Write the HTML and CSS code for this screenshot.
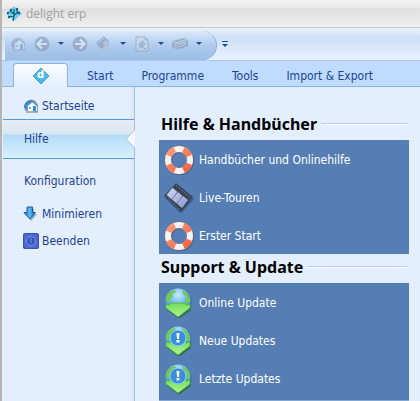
FILE: index.html
```html
<!DOCTYPE html>
<html lang="de">
<head>
    <meta charset="UTF-8">
    <meta name="viewport" content="width=device-width, initial-scale=1.0">
    <title>delight erp</title>
    <link rel="stylesheet" href="styles.css">
</head>
<body>

<!-- shared icons -->
<svg class="defs" aria-hidden="true">
    <defs>
        <linearGradient id="ringRed" x1="0" y1="0" x2="1" y2="1">
            <stop offset="0" stop-color="#ff9a7c"/>
            <stop offset="1" stop-color="#f0603c"/>
        </linearGradient>
        <radialGradient id="globe" cx=".5" cy=".25" r=".8">
            <stop offset="0" stop-color="#c4ebff"/>
            <stop offset=".5" stop-color="#6bb8ee"/>
            <stop offset="1" stop-color="#2a7cc8"/>
        </radialGradient>
        <linearGradient id="green" x1="0" y1="0" x2="0" y2="1">
            <stop offset="0" stop-color="#6fdc5c"/>
            <stop offset="1" stop-color="#b4f78f"/>
        </linearGradient>
        <linearGradient id="film" x1="0" y1="0" x2="1" y2="1">
            <stop offset="0" stop-color="#d0d9f5"/>
            <stop offset="1" stop-color="#8598d6"/>
        </linearGradient>
        <linearGradient id="arrow" x1="0" y1="0" x2="1" y2="0">
            <stop offset="0" stop-color="#1d73c9"/>
            <stop offset=".5" stop-color="#5bbcf5"/>
            <stop offset="1" stop-color="#155aa8"/>
        </linearGradient>
        <symbol id="ring" viewBox="0 0 30 30">
            <circle cx="16" cy="16" r="11" fill="none" stroke="#2d4b78" stroke-width="6" opacity=".6"/>
            <circle cx="15" cy="15" r="11" fill="none" stroke="#8d5f60" stroke-width="7"/>
            <circle cx="15" cy="15" r="11" fill="none" stroke="#f5f3f0" stroke-width="6"/>
            <circle cx="15" cy="15" r="11" fill="none" stroke="url(#ringRed)" stroke-width="6" stroke-dasharray="8.64 8.64" stroke-dashoffset="-4"/>
        </symbol>
        <symbol id="movie" viewBox="0 0 30 30">
            <path d="M13 1 L30 16 L17 31 L1 15 Z" fill="#29436e" opacity=".5"/>
            <path d="M12 0 L29 14 L17 29 L0 13 Z" fill="#3b4558"/>
            <path d="M8.500 5 L13 9 L7.500 16 L3 12 Z M14 9.500 L18 13 L12.500 20 L8.500 16.500 Z M19 13.500 L23.500 17 L18 24.500 L13.500 20.500 Z" fill="url(#film)" stroke="#dce4fa" stroke-width=".5"/>
            <path d="M12 2.500 L27 15 M2 13.500 L16 27" stroke="#78849a" stroke-dasharray="1.5 1.8"/>
        </symbol>
        <symbol id="update" viewBox="0 0 30 30">
            <circle cx="15" cy="14" r="12.5" fill="#254a78" opacity=".5"/>
            <circle cx="14" cy="13" r="12.5" fill="url(#globe)"/>
            <path d="M2 14 Q1 6 7 3 L11 2 L12 4 L8 6 L9 9 L6 11 L6 14 Z M18 2 Q26 5 26.500 14 L22 15 L21 11 L23 9 L19 6 Z" fill="#6fc857"/>
            <path d="M4 17 L10 16 L15 17 L20 16 L27 17 V22 L15 31 L3 22 Z" fill="#2b6d38" opacity=".8"/>
            <path d="M2 16 L6 17 V15 H22 V17 L26 16 V20 L14 29 L2 20 Z" fill="url(#green)" stroke="#4bb14a" stroke-width=".8"/>
        </symbol>
        <symbol id="news" viewBox="0 0 30 30">
            <use href="#update"/>
            <circle cx="14" cy="12" r="8" fill="#3a8edc" stroke="#8fd0fa" stroke-width="1"/>
            <path d="M12.500 7 H15.500 L15 13 H13 Z M12.500 14 H15.500 V16.500 H12.500 Z" fill="#fff"/>
        </symbol>
        <symbol id="house" viewBox="0 0 16 16">
            <path d="M2 13 Q0 5 6 2 Q13 0 15 8 L15 14 Z" fill="#8fa5b9"/>
            <path d="M1 10 Q1 2 9 2 L3 8 L6 12 Z" fill="#3886cf"/>
            <path d="M5 8 L10 4 L14 8 V13 L5 14 Z" fill="#f7fbff"/>
            <path d="M3 8 L9 3 L15 8" fill="none" stroke="#5488b5" stroke-width="1.400"/>
            <path d="M10 8 H13 V13 H10 Z" fill="#2690e3"/>
            <path d="M6 9 H8 V11 H6 Z" fill="#78add8"/>
            <path d="M3 14 H15" stroke="#727c88"/>
        </symbol>
    </defs>
</svg>

<div class="window">
    <header class="titlebar">
        <svg class="app-icon" viewBox="0 0 16 16" aria-hidden="true">
            <path d="M8 0 L16 7.500 L8 15 L0 7.500 Z" fill="#79cdea"/>
            <path d="M7 15 L8 10 L3 11 M8 11 L8 3 M8 8 L4 5 M8 9 L13 6 M11 7 L11 3" fill="none" stroke="#075a7e" stroke-width="1.200"/>
            <circle cx="5" cy="4" r="1.200" fill="#0c6489"/>
            <circle cx="2" cy="7" r="1.200" fill="#0c6489"/>
            <circle cx="3" cy="11" r="1.200" fill="#0c6489"/>
            <circle cx="11" cy="3" r="1.200" fill="#0c6489"/>
            <circle cx="13" cy="7" r="1.200" fill="#0c6489"/>
        </svg>
        <span>delight erp</span>
    </header>

    <div class="toolbar">
        <div class="quick">
            <button class="tool" aria-label="Startseite">
                <svg class="small muted" viewBox="0 0 16 16"><use href="#house"/></svg>
            </button>
            <button class="tool" aria-label="Zurück">
                <svg class="small faded" viewBox="0 0 16 16">
                    <circle cx="8" cy="8" r="7.500" fill="#8799b3"/>
                    <path d="M8 3.500 L3.500 8 L8 12.500 M4 8 H13" fill="none" stroke="#e6eef9" stroke-width="2.200"/>
                </svg>
            </button>
            <button class="tool drop" aria-label="Verlauf"><i class="caret"></i></button>
            <button class="tool" aria-label="Vorwärts">
                <svg class="small faded" viewBox="0 0 16 16">
                    <circle cx="8" cy="8" r="7.500" fill="#8799b3"/>
                    <path d="M8 3.500 L12.500 8 L8 12.500 M12 8 H3" fill="none" stroke="#e6eef9" stroke-width="2.200"/>
                </svg>
            </button>
            <button class="tool" aria-label="Kontakte">
                <svg class="small faded" viewBox="0 0 16 16">
                    <path d="M0 7 L8 0 L13 5 L13 9 L6 14 Z" fill="#8799b3"/>
                    <circle cx="10" cy="8" r="3" fill="#a5b9d3"/>
                    <path d="M5 14 Q8 9 12 11 L16 14 L12 16 Z" fill="#b2c5dc"/>
                    <path d="M2 7 L8 2" stroke="#b5c8df"/>
                </svg>
            </button>
            <button class="tool drop" aria-label="Kontakte Menü"><i class="caret"></i></button>
            <button class="tool" aria-label="Dokument">
                <svg class="small faded" viewBox="0 0 16 16">
                    <path d="M2 1 H11 L14 4 V15 H2 Z" fill="#ccdaec" stroke="#8799b3"/>
                    <path d="M11 1 V4 H14" fill="none" stroke="#8799b3"/>
                    <path d="M8 4 L12 8 L8 12 L4 9 Z" fill="#93abc9"/>
                    <path d="M4 13 L7 10 L9 12 L12 13" fill="none" stroke="#7b8fae"/>
                </svg>
            </button>
            <button class="tool drop" aria-label="Dokument Menü"><i class="caret"></i></button>
            <button class="tool" aria-label="Artikel">
                <svg class="small faded" viewBox="0 0 16 16">
                    <path d="M0 5 L12 2 L16 3 V10 L4 14 L0 11 Z" fill="#8799b3"/>
                    <path d="M0 5 L4 7 L16 3 M4 7 V14" fill="none" stroke="#c5d3e7"/>
                    <path d="M6 8 L14 6 M6 11 L14 8" stroke="#c5d3e7"/>
                </svg>
            </button>
            <button class="tool drop" aria-label="Artikel Menü"><i class="caret"></i></button>
        </div>
        <button class="tool more" aria-label="Symbolleiste anpassen"><i class="caret"></i></button>
    </div>

    <nav class="tabs">
        <button class="tab active" aria-label="delight">
            <svg class="logo" viewBox="0 0 18 18"><path d="M9 1 L17 9 L9 17 L1 9 Z" fill="#4bb8e8" stroke="#3fa5d4"/></svg>
            <span class="logo-letter">d</span>
        </button>
        <button class="tab">Start</button>
        <button class="tab">Programme</button>
        <button class="tab">Tools</button>
        <button class="tab">Import &amp; Export</button>
    </nav>

    <div class="content">
        <nav class="sidebar">
            <a class="item" href="#"><svg class="small" viewBox="0 0 16 16"><use href="#house"/></svg>Startseite</a>
            <a class="item selected" href="#">Hilfe
                <svg class="pointer" viewBox="0 0 9 18"><path d="M9 0 L0 9 L9 18" fill="#f4f7fb" stroke="#b6c3d6"/></svg>
            </a>
            <a class="item config" href="#">Konfiguration</a>
            <a class="item" href="#">
                <svg class="small" viewBox="0 0 16 16">
                    <path d="M5 3 H11 V8 H14 L8 15 L2 8 H5 Z" fill="#82909e" opacity=".7"/>
                    <path d="M4 1 H9.500 V6.500 H12.500 L7 13 L1 6.500 H4 Z" fill="url(#arrow)" stroke="#175ca6"/>
                </svg>Minimieren
            </a>
            <a class="item" href="#">
                <svg class="small" viewBox="0 0 16 16">
                    <rect width="16" height="16" rx="2" fill="#3751b5"/>
                    <rect x="1" y="1" width="14" height="14" rx="2" fill="#4c68d2"/>
                    <circle cx="8" cy="8" r="4.500" fill="#3753bd" stroke="#7b94e4"/>
                    <path d="M8 5 V10" stroke="#7b94e4"/>
                </svg>Beenden
            </a>
        </nav>

        <main class="main">
            <section>
                <h2>Hilfe &amp; Handbücher</h2>
                <div class="panel">
                    <a href="#"><svg class="big"><use href="#ring"/></svg>Handbücher und Onlinehilfe</a>
                    <a href="#"><svg class="big"><use href="#movie"/></svg>Live-Touren</a>
                    <a href="#"><svg class="big"><use href="#ring"/></svg>Erster Start</a>
                </div>
            </section>
            <section>
                <h2>Support &amp; Update</h2>
                <div class="panel last">
                    <a href="#"><svg class="big"><use href="#update"/></svg>Online Update</a>
                    <a href="#"><svg class="big"><use href="#news"/></svg>Neue Updates</a>
                    <a href="#"><svg class="big"><use href="#news"/></svg>Letzte Updates</a>
                </div>
            </section>
        </main>
    </div>
</div>

</body>
</html>
```

FILE: styles.css
```css
* {
    box-sizing: border-box;
}
body {
    margin: 0;
    font-family: "DejaVu Sans Condensed", "DejaVu Sans", sans-serif;
    font-size: 12px;
    color: #1e4490;
    background-color: #e3efff;
}
a {
    color: inherit;
    text-decoration: none;
}
button {
    font: inherit;
    color: inherit;
    background: none;
    border: none;
    padding: 0;
}
svg {
    flex: none;
    display: block;
}
.defs {
    position: absolute;
    width: 0;
    height: 0;
}
.window {
    display: flex;
    flex-direction: column;
    min-height: 100vh;
    border-left: 2px solid #b5b5b5;
}
.small {
    width: 16px;
    height: 16px;
}
.muted {
    filter: grayscale(0.6);
    opacity: 0.35;
}
.faded {
    opacity: 0.6;
}
.big {
    width: 30px;
    height: 30px;
}

/* title bar */
.titlebar {
    display: flex;
    align-items: center;
    gap: 4px;
    height: 28px;
    padding: 0 4px;
    font-family: "Open Sans", sans-serif;
    color: #a0a0a0;
    background: linear-gradient(#f2f2f2 0, #e9e9e9 8px, #dfdfdf 9px, #f0f0f0 100%);
    border-bottom: 1px solid #c8c8c8;
}
.app-icon {
    width: 16px;
    height: 16px;
}

/* quick access bar */
.toolbar {
    display: flex;
    align-items: flex-end;
    height: 33px;
    padding-left: 3px;
    background: linear-gradient(#e8f2fe 0, #d8e7fa 7px, #cde0f7 8px, #e6f1fe 100%);
    border-bottom: 1px solid #a9c9f0;
}
.quick {
    display: flex;
    align-items: center;
    gap: 8px;
    width: 212px;
    height: 29px;
    padding: 0 0 4px 5px;
    border-right: 1px solid #87aedd;
    border-radius: 0 16px 16px 0;
    background: linear-gradient(#dce9f9 0, #c0d6f2 9px, #adc9ec 16px, #9bbde6 100%);
}
.drop {
    width: 6px;
}
.caret {
    display: block;
    width: 0;
    border: 3px solid transparent;
    border-top-color: #1f4a9b;
    border-bottom: none;
}
.more {
    margin: 0 0 13px 5px;
    padding-top: 2px;
    border-top: 1px solid #1f4a9b;
}

/* ribbon tabs */
.tabs {
    display: flex;
    align-items: flex-end;
    height: 26px;
    padding-left: 11px;
    background-color: #bfdbff;
    border-bottom: 1px solid #8db2e3;
}
.tab {
    height: 24px;
    padding: 4px 14px 0;
    white-space: nowrap;
}
.active {
    position: relative;
    width: 55px;
    margin: 0 5px -1px 0;
    padding: 3px 18px;
    border: 1px solid #8db2e3;
    border-bottom: none;
    border-radius: 4px 4px 0 0;
    background: linear-gradient(#fbfdff, #e3efff);
}
.logo {
    width: 18px;
    height: 18px;
}
.logo-letter {
    position: absolute;
    inset: 4px 0 0;
    font-family: "DejaVu Sans", sans-serif;
    font-size: 10px;
    font-weight: bold;
    line-height: 14px;
    text-align: center;
    color: white;
}

/* left menu */
.content {
    display: flex;
    flex: 1;
}
.sidebar {
    flex: none;
    width: 133px;
    padding: 5px 0 0 1px;
    border-right: 1px solid #a5bfe1;
    background: linear-gradient(to left, #d7e5f7, #e3efff 5px);
}
.item {
    display: flex;
    align-items: center;
    gap: 3px;
    height: 27px;
    padding-left: 20px;
}
.selected {
    position: relative;
    height: 40px;
    padding-left: 21px;
    border-top: 1px solid #5b97dc;
    border-bottom: 1px solid #5b97dc;
    background: linear-gradient(#e6ecf2 0, #d9e7f3 14px, #b4daf6 15px, #c3e5fa 24px, #d7f0ff 100%);
}
.pointer {
    position: absolute;
    right: -1px;
    top: 10px;
    width: 9px;
    height: 18px;
}
.config {
    height: 41px;
    padding: 3px 0 0 21px;
}

/* start page */
.main {
    flex: 1;
    padding: 25px 11px 0 24px;
}
h2 {
    display: flex;
    align-items: center;
    gap: 4px;
    height: 24px;
    margin: 0 2px 4px;
    font-family: "Noto Sans", "Open Sans", sans-serif;
    font-size: 16px;
    color: black;
    white-space: nowrap;
}
h2::after {
    content: "";
    flex: 1;
    border-top: 1px solid #b9cbe8;
    border-bottom: 1px solid white;
}
.panel {
    margin-bottom: 1px;
    background-color: #557eb4;
    color: white;
}
.panel a {
    display: flex;
    align-items: center;
    gap: 5px;
    height: 38px;
    padding: 2px 0 0 5px;
}
.last {
    margin-bottom: 0;
    padding-bottom: 3px;
    border-bottom: 1px solid #86a6d2;
}
```
